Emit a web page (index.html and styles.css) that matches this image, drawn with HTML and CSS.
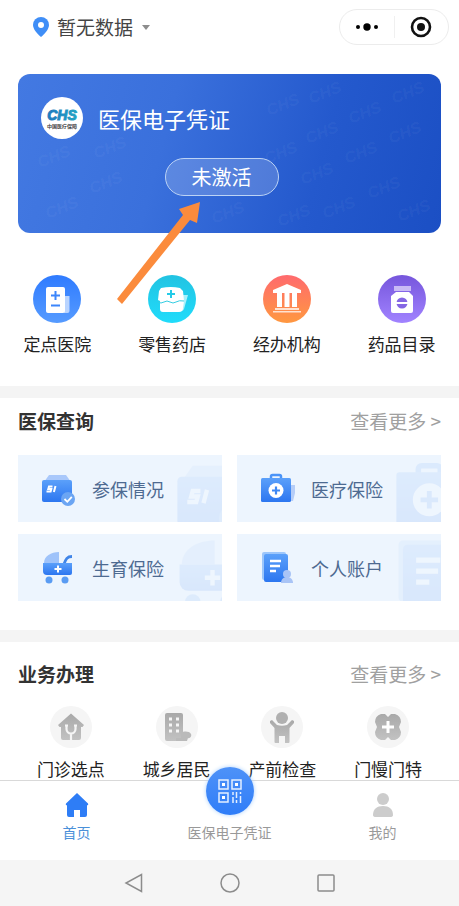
FILE: index.html
```html
<!DOCTYPE html>
<html lang="zh-CN">
<head>
<meta charset="utf-8">
<meta name="viewport" content="width=device-width, initial-scale=1">
<title>医保电子凭证</title>
<link rel="stylesheet" href="styles.css">
</head>
<body>
<svg class="defs" aria-hidden="true">
  <defs>
    <linearGradient id="blue" x1="0" y1="0" x2="0" y2="1"><stop offset="0" stop-color="#2f7bff"/><stop offset="1" stop-color="#569bff"/></linearGradient>
    <linearGradient id="deep" x1="0" y1="0" x2="0" y2="1"><stop offset="0" stop-color="#5ba0fa"/><stop offset="1" stop-color="#2c76f0"/></linearGradient>
    <linearGradient id="cyan" x1="0" y1="0" x2="0" y2="1"><stop offset="0" stop-color="#22c3e2"/><stop offset="1" stop-color="#20dcfb"/></linearGradient>
    <linearGradient id="orange" x1="0" y1="0" x2="0" y2="1"><stop offset="0" stop-color="#ff6a6e"/><stop offset="1" stop-color="#ff9840"/></linearGradient>
    <linearGradient id="purple" x1="0" y1="0" x2="0" y2="1"><stop offset="0" stop-color="#7656dc"/><stop offset="1" stop-color="#a183ff"/></linearGradient>
    <linearGradient id="grey" x1="0" y1="0" x2="0" y2="1"><stop offset="0" stop-color="#a9a9a9"/><stop offset="1" stop-color="#c2c2c2"/></linearGradient>
    <symbol id="wallet" viewBox="0 0 36 36">
      <path d="M9 4h17l5 7H4z" fill="#a9c8fb"/>
      <rect x="2" y="9" width="30" height="22" rx="2" fill="url(#deep)"/>
      <path d="M12.500 15.500H9L8.300 18h3l-.7 2.500H6.500M15.500 15l-1.600 6" fill="none" stroke="#fff" stroke-width="2"/>
      <circle cx="28" cy="28" r="7" fill="#6ba5f3"/>
      <path d="M24.500 28l2.800 2.800 4.500-5" fill="none" stroke="#fff" stroke-width="1.800"/>
    </symbol>
    <symbol id="kit" viewBox="0 0 36 36">
      <path d="M31 14h7l-4 16h-3z" fill="#b5cdf8"/>
      <path d="M12 8V5.500A1.500 1.500 0 0 1 13.500 4h7A1.500 1.500 0 0 1 22 5.500V8" fill="none" stroke="#4b94f8" stroke-width="2.500"/>
      <rect x="2" y="7" width="30" height="24" rx="1.500" fill="url(#deep)"/>
      <circle cx="17" cy="19.500" r="7.500" fill="#fff"/>
      <path d="M17 15.500v8M13 19.500h8" stroke="#3f88f4" stroke-width="2.200"/>
    </symbol>
    <symbol id="pram" viewBox="0 0 36 36">
      <path d="M4 13C4 6 11 2 19 2v11z" fill="#9fc3fa"/>
      <path d="M24 14c2-5 3-7.500 8-7.500" fill="none" stroke="#4085e8" stroke-width="2.800"/>
      <path d="M3 13h29v10a2 2 0 0 1-2 2H7a4 4 0 0 1-4-4z" fill="url(#deep)"/>
      <path d="M18 15.500v7M14.500 19h7" stroke="#fff" stroke-width="2"/>
      <circle cx="9" cy="30" r="3.500" fill="#5a9cf3"/><circle cx="25" cy="30" r="3.500" fill="#5a9cf3"/>
    </symbol>
    <symbol id="account" viewBox="0 0 36 36">
      <rect x="3" y="2" width="24" height="28" rx="2" fill="#9cc6fb"/>
      <rect x="5" y="4" width="24" height="28" rx="2" fill="url(#deep)"/>
      <path d="M11 11h11M11 16h10M11 21h6" stroke="#fff" stroke-width="2.400"/>
      <circle cx="28" cy="24" r="4" fill="#a9c4f6"/><path d="M22 33c0-4 3-6 6-6s6 2 6 6z" fill="#a9c4f6"/>
    </symbol>
  </defs>
</svg>

<header class="topbar">
  <button class="city" type="button">
    <svg width="16" height="20" viewBox="0 0 16 20" aria-hidden="true"><path d="M8 0a8 8 0 0 1 8 8c0 4-4 8.500-8 12C4 16.500 0 12 0 8a8 8 0 0 1 8-8z" fill="#3f8ef7"/><circle cx="8" cy="8" r="3" fill="#fff"/></svg>
    <span>暂无数据</span>
    <svg class="caret" width="8" height="5" viewBox="0 0 8 5" aria-hidden="true"><path d="M0 0h8L4 5z" fill="#8d8d8d"/></svg>
  </button>
  <div class="capsule">
    <button type="button" aria-label="更多"><svg width="24" height="8" viewBox="0 0 24 8"><circle cx="3" cy="4" r="2"/><circle cx="12" cy="4" r="3.700"/><circle cx="21" cy="4" r="2"/></svg></button>
    <button type="button" aria-label="关闭"><svg width="22" height="22" viewBox="0 0 22 22"><circle cx="11" cy="11" r="9" fill="none" stroke="#111" stroke-width="2.600"/><circle cx="11" cy="11" r="4" fill="#111"/></svg></button>
  </div>
</header>

<main>
  <section class="card">
    <svg class="card-mark" viewBox="0 0 423 159" aria-hidden="true">
      <text transform="translate(251 42) rotate(-22)">CHS</text>
      <text transform="translate(293 30) rotate(-22)">CHS</text>
      <text transform="translate(376 30) rotate(-22)">CHS</text>
      <text transform="translate(333 50) rotate(-22)">CHS</text>
      <text transform="translate(290 70) rotate(-22)">CHS</text>
      <text transform="translate(373 70) rotate(-22)">CHS</text>
      <text transform="translate(249 90) rotate(-22)">CHS</text>
      <text transform="translate(329 90) rotate(-22)">CHS</text>
      <text transform="translate(285 111) rotate(-22)">CHS</text>
      <text transform="translate(352 125) rotate(-22)">CHS</text>
      <text transform="translate(307 145) rotate(-22)">CHS</text>
      <text transform="translate(262 153) rotate(-22)">CHS</text>
      <text transform="translate(382 148) rotate(-22)">CHS</text>
      <text transform="translate(78 85) rotate(-22)">CHS</text>
      <text transform="translate(22 94) rotate(-22)">CHS</text>
      <text transform="translate(74 120) rotate(-22)">CHS</text>
      <text transform="translate(30 145) rotate(-22)">CHS</text>
      <text transform="translate(196 150) rotate(-22)">CHS</text>
    </svg>
    <div class="card-head">
      <svg width="42" height="42" viewBox="0 0 42 42" role="img" aria-label="中国医疗保障">
        <defs><linearGradient id="chs" x1="0" y1="0" x2="1" y2="0"><stop offset="0" stop-color="#1c78be"/><stop offset="1" stop-color="#22a5c4"/></linearGradient></defs>
        <circle cx="21" cy="21" r="21" fill="#fff"/>
        <text class="logo-main" x="21" y="23" fill="url(#chs)" stroke="url(#chs)">CHS</text>
        <text class="logo-sub" x="21" y="31">中国医疗保障</text>
      </svg>
      <h1>医保电子凭证</h1>
    </div>
    <button class="activate" type="button">未激活</button>
    <svg class="pointer" width="84" height="104" viewBox="0 0 84 104" aria-hidden="true"><path d="M0 98L66 14 62 8l21-7-3 21-7-3L5 103z" fill="#fb8b3c"/></svg>
  </section>

  <nav class="services">
    <a href="#hospital">
      <svg width="48" height="48" viewBox="0 0 48 48" aria-hidden="true"><circle cx="24" cy="24" r="24" fill="url(#blue)"/><path d="M31 21h5.500v15a2 2 0 0 1-2 2H31z" fill="#b9d4ff"/><rect x="13" y="12" width="19" height="26" rx="2" fill="#fff"/><path d="M22.500 16v9M18 20.500h9M18 30.500h9" stroke="#3c86fb" stroke-width="2"/></svg>
      <span>定点医院</span>
    </a>
    <a href="#pharmacy">
      <svg width="48" height="48" viewBox="0 0 48 48" aria-hidden="true"><circle cx="24" cy="24" r="24" fill="url(#cyan)"/><path d="M32 20h8l-4 14a3 3 0 0 1-3 2z" fill="#a8f1fb"/><path d="M13 13q10-2 19 0l3 3 1 10-1 7a4 4 0 0 1-4 4H15a3 3 0 0 1-3-3v-8l-2-1 1-9z" fill="#fff"/><path d="M10 27q3 2 6 0t6 0 6 0 8-1" fill="none" stroke="#35cde2" stroke-width="1"/><path d="M23 15v8M19 19h8" stroke="#24cbe8" stroke-width="2"/></svg>
      <span>零售药店</span>
    </a>
    <a href="#agency">
      <svg width="48" height="48" viewBox="0 0 48 48" aria-hidden="true"><circle cx="24" cy="24" r="24" fill="url(#orange)"/><path d="M24 9l14 6v3H10v-3zM14 17h5v15h-5zM21.500 17h5v15h-5zM29 17h5v15h-5z" fill="#fff"/><path d="M12 33h24v2H12zM10 36h28v1.500H10z" fill="#ffe2d0"/></svg>
      <span>经办机构</span>
    </a>
    <a href="#drugs">
      <svg width="48" height="48" viewBox="0 0 48 48" aria-hidden="true"><circle cx="24" cy="24" r="24" fill="url(#purple)"/><path d="M16 11h17v5H16z" fill="#c9baf5"/><path d="M18 17h13l4 4v15a2 2 0 0 1-2 2H15a2 2 0 0 1-2-2V21z" fill="#fff"/><circle cx="24" cy="28" r="5.500" fill="#8466e4"/><path d="M18 28h12" stroke="#fff" stroke-width="2"/></svg>
      <span>药品目录</span>
    </a>
  </nav>

  <section class="block query">
    <div class="block-head"><h2>医保查询</h2><a href="#query">查看更多 &gt;</a></div>
    <div class="tiles">
      <a class="tile" href="#insured"><svg class="tile-icon"><use href="#wallet"/></svg><span>参保情况</span><svg class="tile-mark"><use href="#wallet"/></svg></a>
      <a class="tile" href="#medical"><svg class="tile-icon"><use href="#kit"/></svg><span>医疗保险</span><svg class="tile-mark"><use href="#kit"/></svg></a>
      <a class="tile" href="#birth"><svg class="tile-icon"><use href="#pram"/></svg><span>生育保险</span><svg class="tile-mark"><use href="#pram"/></svg></a>
      <a class="tile" href="#account-page"><svg class="tile-icon"><use href="#account"/></svg><span>个人账户</span><svg class="tile-mark"><use href="#account"/></svg></a>
    </div>
  </section>

  <section class="block business">
    <div class="block-head"><h2>业务办理</h2><a href="#business">查看更多 &gt;</a></div>
    <nav class="actions">
      <a href="#clinic">
        <svg width="42" height="42" viewBox="0 0 42 42" aria-hidden="true"><circle cx="21" cy="21" r="21" fill="#f5f5f5"/><path d="M21 7.500L34 19l-1.500 2H31v11a2 2 0 0 1-2 2H13a2 2 0 0 1-2-2V21H9.500L8 19z" fill="url(#grey)"/><path d="M16.500 20v3a4.500 4.500 0 0 0 9 0v-3M21 27.500V34" fill="none" stroke="#f5f5f5" stroke-width="2.200"/><path d="M15 19.500h3M24 19.500h3" stroke="#f5f5f5" stroke-width="2"/></svg>
        <span>门诊选点</span>
      </a>
      <a href="#resident">
        <svg width="42" height="42" viewBox="0 0 42 42" aria-hidden="true"><circle cx="21" cy="21" r="21" fill="#f5f5f5"/><rect x="9" y="7" width="18" height="28" rx="2" fill="url(#grey)"/><path d="M13 11.500h3v3h-3zM20 11.500h3v3h-3zM13 17.500h3v3h-3zM20 17.500h3v3h-3zM13 23.500h3v3h-3zM20 23.500h3v3h-3z" fill="#f5f5f5"/><path d="M25 27c3-2 8-2 10 1 1 2-1 5-3 4l-1 3H20v-3h5z" fill="#bababa"/></svg>
        <span>城乡居民</span>
      </a>
      <a href="#prenatal">
        <svg width="42" height="42" viewBox="0 0 42 42" aria-hidden="true"><circle cx="21" cy="21" r="21" fill="#f5f5f5"/><circle cx="21" cy="12" r="6" fill="#b0b0b0"/><path d="M9 15l2-1 5 5q5 1.500 10 0l5-5 2 1v2l-4.500 5v14a1 1 0 0 1-1 1h-3.500v-7h-6v7h-3.500a1 1 0 0 1-1-1V22L9 17z" fill="url(#grey)"/></svg>
        <span>产前检查</span>
      </a>
      <a href="#chronic">
        <svg width="42" height="42" viewBox="0 0 42 42" aria-hidden="true"><circle cx="21" cy="21" r="21" fill="#f5f5f5"/><path d="M14 8h4l3 3 3-3h4q6 2 6 8l-2 5 2 5q0 6-6 8h-4l-3-3-3 3h-4q-6-2-6-8l2-5-2-5q0-6 6-8z" fill="url(#grey)"/><path d="M21 15v12M15 21h12" stroke="#fff" stroke-width="3"/></svg>
        <span>门慢门特</span>
      </a>
    </nav>
  </section>
</main>

<footer>
  <nav class="tabbar">
    <a class="tab active" href="#home"><svg width="24" height="24" viewBox="0 0 24 24" aria-hidden="true"><path d="M12 0l11 10.500q1 1.500-1 2V22a2 2 0 0 1-2 2h-5v-7H9v7H4a2 2 0 0 1-2-2v-9.500q-2-.5-1-2z" fill="#2e7df6"/></svg><span>首页</span></a>
    <a class="tab" href="#voucher">
      <span class="fab"><svg width="24" height="24" viewBox="0 0 24 24" aria-hidden="true"><g fill="none" stroke="#e4efff" stroke-width="1.500"><path d="M1 1h9v9H1zM14 1h9v9h-9zM1 14h9v9H1z"/></g><path d="M4 4h3v3H4zM17 4h3v3h-3zM4 17h3v3H4z" fill="#fff"/><path d="M15 13v3m0 2v6M18.500 13v6m0 2v3M22.500 13v2m0 2v7" stroke="#e4efff" stroke-width="1.500"/></svg></span>
      <span>医保电子凭证</span>
    </a>
    <a class="tab" href="#mine"><svg width="24" height="24" viewBox="0 0 24 24" aria-hidden="true"><circle cx="12" cy="6" r="6" fill="#ccc"/><path d="M2 22c0-6 4-9 10-9s10 3 10 9q0 2-3 2H5q-3 0-3-2z" fill="#ccc"/></svg><span>我的</span></a>
  </nav>
  <div class="system">
    <button type="button" aria-label="返回"><svg width="20" height="20" viewBox="0 0 20 20"><path d="M17.500 1.500v17L2 10z"/></svg></button>
    <button type="button" aria-label="主屏幕"><svg width="20" height="20" viewBox="0 0 20 20"><circle cx="10" cy="10" r="9"/></svg></button>
    <button type="button" aria-label="最近任务"><svg width="20" height="20" viewBox="0 0 20 20"><rect x="2" y="2" width="16" height="16" rx="1"/></svg></button>
  </div>
</footer>
</body>
</html>
```
FILE: styles.css
```css
* {
  box-sizing: border-box;
}

body {
  margin: 0;
  min-height: 100vh;
  display: flex;
  flex-direction: column;
  background: #fff;
  color: #222;
  font-family: "Noto Sans CJK SC", sans-serif;
  font-size: 17px;
  line-height: 22px;
}

main {
  flex: 1;
}

a {
  color: inherit;
  text-decoration: none;
}

button {
  padding: 0;
  border: 0;
  background: none;
  color: inherit;
  font: inherit;
}

svg {
  display: block;
  flex: none;
}

h1,
h2 {
  margin: 0;
}

.defs {
  position: absolute;
  width: 0;
  height: 0;
}

/* Top bar */
.topbar {
  display: flex;
  align-items: flex-start;
  justify-content: space-between;
  padding: 9px 10px 29px 33px;
}

.city {
  display: flex;
  align-items: center;
  gap: 8px;
  height: 36px;
  color: #444;
  font-size: 19px;
}

.caret {
  margin-left: 1px;
}

.capsule {
  display: flex;
  align-items: center;
  width: 110px;
  height: 36px;
  border: 1px solid #ececec;
  border-radius: 18px;
}

.capsule button {
  flex: 1;
  display: flex;
  justify-content: center;
}

.capsule button + button {
  border-left: 1px solid #f0f0f0;
}

/* Voucher card */
.card {
  position: relative;
  display: flex;
  flex-direction: column;
  align-items: center;
  margin: 0 18px;
  padding: 23px 23px 37px;
  border-radius: 12px;
  background: linear-gradient(105deg, #4379e2 0%, #3a70dc 35%, #2459cd 70%, #1b4fc4 100%);
  color: #fff;
}

.card-mark {
  position: absolute;
  inset: 0;
  width: 100%;
  height: 100%;
}

.card-mark text {
  fill: #fff;
  fill-opacity: 0.05;
  font: italic bold 16px "Liberation Sans", sans-serif;
}

.card-head {
  position: relative;
  align-self: stretch;
  display: flex;
  align-items: center;
  gap: 15px;
}

.card-head h1 {
  font-size: 22px;
  font-weight: 400;
  line-height: 32px;
}

.logo-main {
  font: italic bold 14px "Liberation Sans", sans-serif;
  stroke-width: 1px;
  text-anchor: middle;
}

.logo-sub {
  fill: #444;
  font-size: 5px;
  font-weight: 700;
  text-anchor: middle;
}

.activate {
  position: relative;
  width: 114px;
  height: 38px;
  margin-top: 19px;
  margin-right: 16px;
  border: 1px solid #bcd3f5;
  border-radius: 19px;
  background: rgba(255, 255, 255, 0.18);
  font-size: 20px;
}

.pointer {
  position: absolute;
  left: 99px;
  top: 127px;
}

/* Service shortcuts */
.services {
  display: grid;
  grid-template-columns: repeat(4, 1fr);
  padding: 42px 0 31px;
}

.services a,
.actions a {
  display: flex;
  flex-direction: column;
  align-items: center;
  gap: 10px;
}

/* Sections */
.block {
  padding: 0 18px;
  border-top: 12px solid #f4f4f4;
}

.block-head {
  display: flex;
  align-items: center;
  justify-content: space-between;
  padding: 8px 0 19px;
  font-size: 19px;
  line-height: 30px;
}

.block-head h2 {
  color: #333;
  font-size: 19px;
  font-weight: 700;
}

.block-head a {
  color: #a0a0a0;
}

.query {
  padding-bottom: 29px;
}

.tiles {
  display: grid;
  grid-template-columns: 1fr 1fr;
  gap: 12px 15px;
}

.tile {
  position: relative;
  display: flex;
  align-items: center;
  gap: 16px;
  height: 67px;
  padding-left: 22px;
  overflow: hidden;
  background: #edf5fe;
  color: #4d6a91;
  font-size: 18px;
}

.tile-icon {
  width: 36px;
  height: 36px;
}

.tile-mark {
  position: absolute;
  right: -30px;
  top: 2px;
  width: 79px;
  height: 79px;
  opacity: 0.1;
}

.business .block-head {
  padding-top: 17px;
  padding-bottom: 17px;
}

.actions {
  display: grid;
  grid-template-columns: repeat(4, 1fr);
}

/* Tab bar */
.tabbar {
  display: grid;
  grid-template-columns: repeat(3, 1fr);
  height: 80px;
  border-top: 1px solid #d9d9d9;
  background: #fff;
  color: #999;
  font-size: 14px;
  line-height: 20px;
}

.tab {
  position: relative;
  display: flex;
  flex-direction: column;
  align-items: center;
  justify-content: flex-end;
  gap: 5px;
  padding-bottom: 18px;
}

.tab.active {
  color: #4a90d9;
}

.fab {
  position: absolute;
  top: -14px;
  display: flex;
  align-items: center;
  justify-content: center;
  width: 48px;
  height: 48px;
  border-radius: 50%;
  background: linear-gradient(#4e92f8, #2f7df8);
  box-shadow: 0 0 4px #a9d0ff;
}

/* System navigation */
.system {
  display: flex;
  justify-content: center;
  gap: 76px;
  padding: 13px 0;
  background: #f5f5f5;
}

.system svg {
  fill: none;
  stroke: #8c8c8c;
  stroke-width: 1.5;
}
```
